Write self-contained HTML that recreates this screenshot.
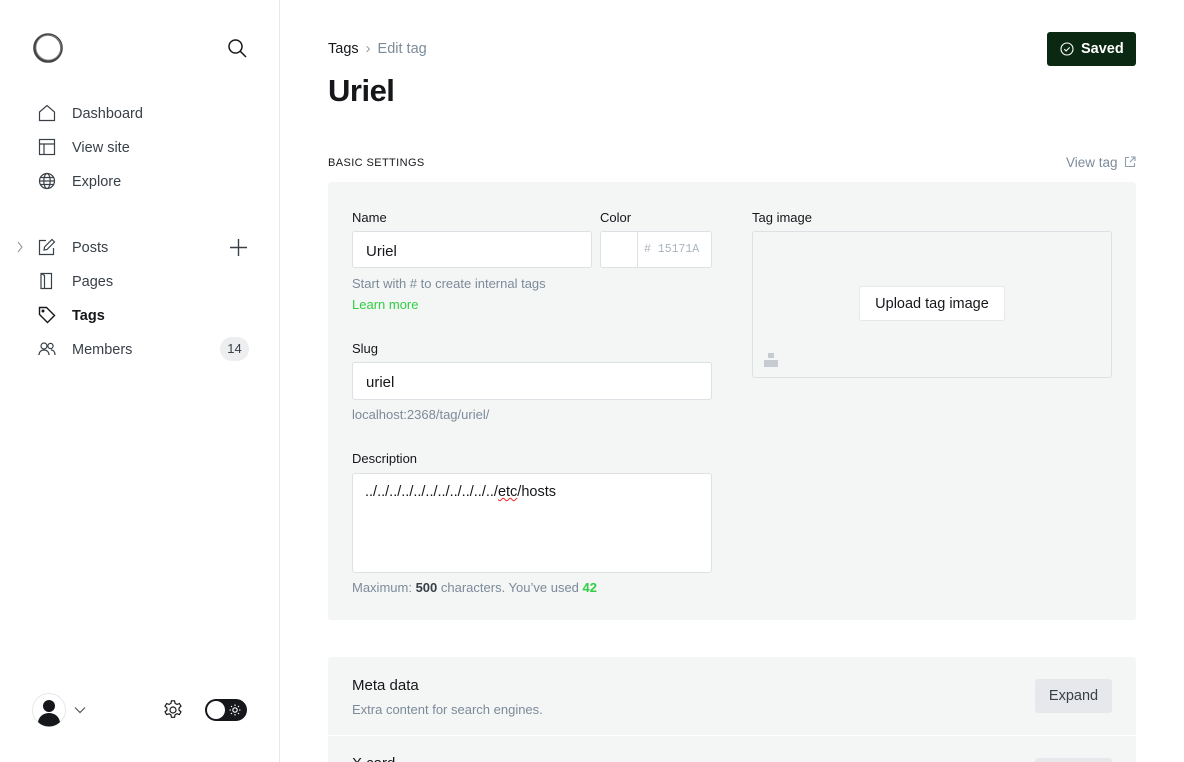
<!DOCTYPE html>
<html style="overflow:hidden;width:1184px;height:762px"><head><meta charset="utf-8"><style>
*{box-sizing:border-box;margin:0;padding:0}
body{width:1184px;height:762px;overflow:hidden;background:#fff;font-family:"Liberation Sans",sans-serif;color:#15171a;position:relative}
.a{position:absolute}
.side{left:0;top:0;width:280px;height:762px;border-right:1px solid #e6e8eb}
.nav{position:absolute;left:72px;font-size:14.5px;color:#394047;line-height:18px}
.ic{position:absolute;left:38px}
.lbl{font-size:13px;color:#15171a;font-weight:500}
.inp{background:#fff;border:1px solid #dde1e5;border-radius:3px}
.hint{font-size:13px;color:#7c8b9a}
svg{display:block}
</style></head><body>
<div class="a side">
  <svg class="a" style="left:32px;top:32px" width="32" height="32" viewBox="0 0 32 32"><circle cx="16" cy="16" r="13.5" fill="none" stroke="#444" stroke-width="2.6"/><circle cx="16.5" cy="15.5" r="12.5" fill="none" stroke="#888" stroke-width="0.8"/></svg>
  <svg class="a" style="left:227px;top:38px" width="20" height="20" viewBox="0 0 20 20" fill="none" stroke="#15171a" stroke-width="1.5"><circle cx="8.5" cy="8.5" r="6.5"/><path d="M13.3 13.3L19 19"/></svg>
  <svg class="ic" style="top:104px" width="18" height="18" viewBox="0 0 18 18" fill="none" stroke="#394047" stroke-width="1.2"><path d="M1.5 8L9 1.5 16.5 8V16.5H1.5Z"/></svg>
  <div class="nav" style="top:105px">Dashboard</div>
  <svg class="ic" style="top:138px" width="18" height="18" viewBox="0 0 18 18" fill="none" stroke="#394047" stroke-width="1.2"><rect x="1.5" y="1.5" width="15" height="15"/><path d="M1.5 6H16.5M6 6V16.5"/></svg>
  <div class="nav" style="top:139px">View site</div>
  <svg class="ic" style="top:172px" width="18" height="18" viewBox="0 0 18 18" fill="none" stroke="#394047" stroke-width="1.2"><circle cx="9" cy="9" r="7.5"/><ellipse cx="9" cy="9" rx="3.2" ry="7.5"/><path d="M1.5 9H16.5M2.5 5.5H15.5M2.5 12.5H15.5"/></svg>
  <div class="nav" style="top:173px">Explore</div>
  <svg class="a" style="left:16px;top:241px" width="8" height="12" viewBox="0 0 8 12" fill="none" stroke="#999" stroke-width="1.1"><path d="M2 1l4 5-4 5"/></svg>
  <svg class="ic" style="top:238px" width="18" height="18" viewBox="0 0 18 18" fill="none" stroke="#394047" stroke-width="1.2"><path d="M8 2.5H1.5V16.5H15.5V10"/><path d="M14 1.5L16.5 4 9 11.5 6 12 6.5 9Z"/></svg>
  <div class="nav" style="top:239px">Posts</div>
  <svg class="a" style="left:229px;top:238px" width="19" height="19" viewBox="0 0 19 19" stroke="#394047" stroke-width="1.4"><path d="M9.5 1V18M1 9.5H18"/></svg>
  <svg class="ic" style="top:272px" width="18" height="18" viewBox="0 0 18 18" fill="none" stroke="#394047" stroke-width="1.2"><path d="M3 1.5H13.5V16.5H3Z M3 1.5L6.5 3.5V17"/></svg>
  <div class="nav" style="top:273px">Pages</div>
  <svg class="ic" style="top:306px" width="18" height="18" viewBox="0 0 18 18" fill="none" stroke="#15171a" stroke-width="1.4"><path d="M1.5 1.5H8.5L16.5 9.5 9.5 16.5 1.5 8.5Z"/><circle cx="5" cy="5" r="0.8"/></svg>
  <div class="nav" style="top:307px;font-weight:bold;color:#15171a">Tags</div>
  <svg class="ic" style="top:340px" width="18" height="18" viewBox="0 0 18 18" fill="none" stroke="#394047" stroke-width="1.2"><circle cx="6" cy="6" r="3"/><path d="M1 15c0-3 2-5 5-5s5 2 5 5"/><circle cx="12.5" cy="6" r="2.6"/><path d="M13 10c2.5 0 4 2 4 5"/></svg>
  <div class="nav" style="top:341px">Members</div>
  <div class="a" style="left:220px;top:337px;width:29px;height:24px;border-radius:12px;background:#eceef0;font-size:13px;color:#394047;text-align:center;line-height:24px;font-weight:500">14</div>
  <svg class="a" style="left:32px;top:693px" width="34" height="34" viewBox="0 0 34 34"><circle cx="17" cy="17" r="16.5" fill="#fff" stroke="#e6e8eb"/><circle cx="17" cy="13" r="6" fill="#15171a"/><path d="M6 29c1-6 6-9 11-9s10 3 11 9c-3 3-7 4.5-11 4.5S9 32 6 29Z" fill="#15171a"/></svg>
  <svg class="a" style="left:74px;top:706px" width="12" height="8" viewBox="0 0 12 8" fill="none" stroke="#555" stroke-width="1.2"><path d="M1 1.5l5 5 5-5"/></svg>
  <svg class="a" style="left:162px;top:699px" width="22" height="22" viewBox="0 0 24 24" fill="none" stroke="#15171a" stroke-width="1.3"><circle cx="12" cy="12" r="3.3"/><path d="M10.3 2h3.4l.6 2.8 2 1.1 2.7-.9 1.7 2.9-2.1 1.9v2.4l2.1 1.9-1.7 2.9-2.7-.9-2 1.1-.6 2.8h-3.4l-.6-2.8-2-1.1-2.7.9-1.7-2.9 2.1-1.9v-2.4L3.3 7.9 5 5l2.7.9 2-1.1Z"/></svg>
  <div class="a" style="left:205px;top:699px;width:42px;height:22px;border-radius:11px;background:#15171a"></div>
  <div class="a" style="left:207px;top:701px;width:18px;height:18px;border-radius:9px;background:#fff"></div>
  <svg class="a" style="left:229px;top:704px" width="12" height="12" viewBox="0 0 12 12" stroke="#fff" stroke-width="1.1" fill="none"><circle cx="6" cy="6" r="2.2"/><path d="M6 0.5V2M6 10V11.5M0.5 6H2M10 6H11.5M2 2L3 3M9 9L10 10M2 10L3 9M9 3L10 2"/></svg>
</div>

<div class="a" style="left:328px;top:41px;font-size:14.5px;color:#15171a">Tags <span style="color:#8e9cac;margin:0 3px">›</span> <span style="color:#7c8b9a">Edit tag</span></div>
<div class="a" style="left:328px;top:73px;font-size:31px;font-weight:bold;letter-spacing:-0.5px">Uriel</div>
<div class="a" style="left:1047px;top:32px;width:89px;height:34px;background:#0b2912;border-radius:3px;color:#fff;font-size:14.5px;font-weight:bold;line-height:34px;padding-left:34px">Saved</div>
<svg class="a" style="left:1060px;top:42px" width="14" height="14" viewBox="0 0 14 14" fill="none" stroke="#fff" stroke-width="1.1"><circle cx="7" cy="7" r="6"/><path d="M4.3 7.2l1.8 1.8 3.6-3.6"/></svg>

<div class="a" style="left:328px;top:157px;font-size:11px;font-weight:500;letter-spacing:0.4px">BASIC SETTINGS</div>
<div class="a" style="left:1066px;top:155px;font-size:13.5px;color:#7c8b9a">View tag</div>
<svg class="a" style="left:1124px;top:156px" width="12" height="12" viewBox="0 0 12 12" fill="none" stroke="#8e9cac" stroke-width="1.1"><path d="M5 1.5H1.5V10.5H10.5V7M7 1H11V5M11 1L6 6"/></svg>

<div class="a" style="left:328px;top:182px;width:808px;height:438px;background:#f4f5f5;border-radius:3px"></div>
<div class="a lbl" style="left:352px;top:210px">Name</div>
<div class="a inp" style="left:352px;top:231px;width:240px;height:37px;font-size:15px;padding:11px 13px">Uriel</div>
<div class="a lbl" style="left:600px;top:210px">Color</div>
<div class="a inp" style="left:600px;top:231px;width:112px;height:37px"></div>
<div class="a" style="left:637px;top:232px;width:1px;height:35px;background:#dde1e5"></div>
<div class="a" style="left:644px;top:243px;font-size:11.5px;color:#aab4be;font-family:'Liberation Mono',monospace">#&nbsp;15171A</div>
<div class="a hint" style="left:352px;top:276px">Start with # to create internal tags</div>
<div class="a" style="left:352px;top:297px;font-size:13px;color:#30cf43">Learn more</div>
<div class="a lbl" style="left:352px;top:341px">Slug</div>
<div class="a inp" style="left:352px;top:362px;width:360px;height:38px;font-size:15px;padding:11px 13px">uriel</div>
<div class="a hint" style="left:352px;top:407px">localhost:2368/tag/uriel/</div>
<div class="a lbl" style="left:352px;top:451px">Description</div>
<div class="a inp" style="left:352px;top:473px;width:360px;height:100px;font-size:14.5px;padding:10px 12px">../../../../../../../../../../../<span style="text-decoration:underline wavy #e22;text-decoration-thickness:1px">etc</span>/hosts</div>
<div class="a hint" style="left:352px;top:580px">Maximum: <b style="color:#394047">500</b> characters. You’ve used <b style="color:#30cf43">42</b></div>
<div class="a lbl" style="left:752px;top:210px">Tag image</div>
<div class="a" style="left:752px;top:231px;width:360px;height:147px;border:1px solid #dde1e5;border-radius:3px"></div>
<div class="a" style="left:859px;top:286px;width:146px;height:35px;background:#fff;border:1px solid #e6e8eb;border-radius:3px;font-size:14.5px;text-align:center;line-height:34px">Upload tag image</div>
<svg class="a" style="left:764px;top:353px" width="14" height="14" viewBox="0 0 14 14" fill="#c5cbd1"><rect x="0" y="7" width="14" height="7"/><rect x="4" y="0" width="6" height="5"/></svg>

<div class="a" style="left:328px;top:657px;width:808px;height:105px;background:#f4f5f5;border-radius:3px 3px 0 0"></div>
<div class="a" style="left:328px;top:735px;width:808px;height:1px;background:#fff"></div>
<div class="a" style="left:352px;top:677px;font-size:15px;font-weight:500">Meta data</div>
<div class="a" style="left:352px;top:702px;font-size:13px;color:#7c8b9a">Extra content for search engines.</div>
<div class="a" style="left:1035px;top:679px;width:77px;height:34px;background:#e6e8eb;border-radius:3px;font-size:14.5px;text-align:center;line-height:34px;color:#394047">Expand</div>
<div class="a" style="left:352px;top:755px;font-size:15px;font-weight:500">X card</div>
<div class="a" style="left:1035px;top:758px;width:77px;height:4px;background:#e6e8eb;border-radius:3px 3px 0 0"></div>
</body></html>
